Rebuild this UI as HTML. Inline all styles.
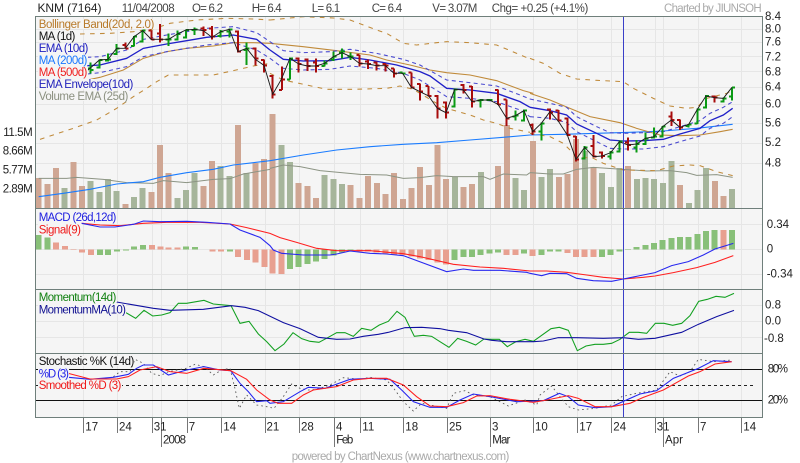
<!DOCTYPE html>
<html>
<head>
<meta charset="utf-8">
<style>
html,body{margin:0;padding:0;background:#fff;width:800px;height:463px;overflow:hidden}
svg{display:block}
text{font-family:"Liberation Sans",sans-serif;font-size:11.5px;fill:#222}
.n{fill:none}
</style>
</head>
<body>
<svg width="800" height="463" viewBox="0 0 800 463" xmlns="http://www.w3.org/2000/svg">
<rect x="36" y="17" width="726" height="401" fill="#f5f5f5"/>
<!-- grid -->
<path shape-rendering="crispEdges" stroke="#e6e6e6" fill="none" d="M83.5 17V418M117.5 17V418M152.5 17V418M161.5 17V418M187.5 17V418M221.5 17V418M265.5 17V418M299.5 17V418M334.5 17V418M360.5 17V418M403.5 17V418M447.5 17V418M490.5 17V418M533.5 17V418M577.5 17V418M611.5 17V418M655.5 17V418M663.5 17V418M698.5 17V418M741.5 17V418
M36 29.5H762M36 42.5H762M36 56.5H762M36 71.5H762M36 87.5H762M36 104.5H762M36 123.5H762M36 143.5H762M36 163.5H762
M36 224.5H762M36 249.5H762M36 274.5H762M36 305.5H762M36 321.5H762M36 337.5H762"/>
<g transform="scale(.33333)">
<!-- volume -->
<g transform="scale(3)" fill="none" stroke-width="6" shape-rendering="crispEdges">
<path stroke="#cfa693" d="M38.7 208V178M47.4 208V184M56 208V168M73.4 208V162M82 208V186M125.4 208V204M151.4 208V192M160.1 208V145M168.7 208V173M203.4 208V186M212.1 208V161M238.1 208V125M255.4 208V163M264.1 208V159M272.7 208V114M298.7 208V183M307.4 208V186M316.1 208V198M350.7 208V185M359.4 208V198M368.1 208V176M376.8 208V183M385.4 208V194M394.1 208V173M402.8 208V199M411.4 208V188M420.1 208V167M428.8 208V185M437.4 208V145M446.1 208V179M463.4 208V187M472.1 208V184M498.1 208V166M506.8 208V125M532.8 208V141M558.8 208V177M567.4 208V174M576.1 208V139M593.4 208V167M628.1 208V166M680.1 208V185M714.8 208V181M723.5 208V196"/>
<path stroke="#a6b59b" d="M64.7 208V188M90.7 208V181M99.4 208V192M108 208V179M116.7 208V191M134 208V197M142.7 208V188M177.4 208V198M186.1 208V190M194.7 208V173M220.7 208V166M229.4 208V176M246.7 208V173M281.4 208V145M290.1 208V162M324.7 208V175M333.4 208V179M342.1 208V184M454.8 208V177M480.8 208V172M515.4 208V178M524.1 208V190M541.4 208V177M550.1 208V169M584.8 208V151M602.1 208V173M610.8 208V187M619.4 208V168M636.8 208V179M645.5 208V178M654.1 208V179M662.8 208V183M671.5 208V161M688.8 208V203M697.5 208V190M706.1 208V168M732.1 208V189"/>
</g>
<!-- volume EMA -->
<g fill="none" stroke="#8c9484" stroke-width="3">
<polyline points="116,535 200,535 230,532 310,538 380,548 460,550 490,542 560,548 640,538 690,536 730,522 810,508"/>
<polyline transform="translate(810,0)" points="0,505 40,495 90,500 150,512 270,523 350,525 400,535 450,533 500,527 550,530 640,530 660,538 700,522 770,525 780,518"/>
<polyline transform="translate(1590,0)" points="0,518 60,522 100,522 140,508 190,502 280,508 350,513 420,512 470,518 500,526 560,524 608,532"/>
</g>
<!-- MA200 -->
<g fill="none" stroke="#1a7cff" stroke-width="3.2">
<polyline points="116,590 190,580 270,568 350,552 430,545 480,532 560,518 640,508 700,495 760,488 810,482"/>
<polyline transform="translate(810,0)" points="0,482 100,465 200,450 300,440 400,433 500,428 600,420 700,412 780,405"/>
<polyline transform="translate(1590,0)" points="0,405 100,403 200,400 300,397 400,393 500,385 608,373"/>
</g>
<!-- Bollinger bands -->
<g fill="none" stroke="#c08a3a" stroke-width="3.2" stroke-dasharray="14 16">
<polyline points="120,105 240,102 330,100 400,95 465,85 510,70 590,60 680,55 760,57 810,60"/>
<polyline transform="translate(810,0)" points="0,60 100,50 190,54 240,60 320,90 350,100 400,130 440,135 500,128 530,125 600,128 680,135 740,160 780,177"/>
<polyline transform="translate(1590,0)" points="0,175 40,190 90,220 140,237 200,241 280,245 310,265 370,295 420,318 470,325 500,322 530,295 590,280 608,270"/>
<polyline points="120,418 150,408 220,385 290,360 350,325 400,290 440,265 470,245 505,225 560,225 640,225 700,212 760,198 810,190"/>
<polyline transform="translate(810,0)" points="0,220 40,240 110,255 170,268 250,268 350,265 390,258 430,268 500,310 530,325 600,345 640,360 680,370 720,385 780,397"/>
<polyline transform="translate(1590,0)" points="0,400 60,410 100,430 140,470 190,475 220,490 280,510 380,512 430,498 480,495 510,497 560,515 608,527"/>
</g>
<g fill="none" stroke="#c08a3a" stroke-width="3.2">
<polyline points="262,240 300,232 370,210 430,175 500,155 560,145 640,138 700,128 760,128 810,130"/>
<polyline transform="translate(810,0)" points="0,130 100,140 200,152 300,165 350,180 420,195 480,210 530,218 600,225 680,242 760,272 790,280"/>
<polyline transform="translate(1590,0)" points="0,280 60,300 120,325 180,350 270,368 320,385 390,405 450,407 510,405 570,395 608,388"/>
</g>
<!-- EMA envelope -->
<g fill="none" stroke="#4a4ad0" stroke-width="3.2" stroke-dasharray="12 10">
<polyline points="262,172 300,170 380,150 430,118 500,105 560,95 620,85 700,80 770,98 810,125"/>
<polyline transform="translate(810,0)" points="0,125 40,152 100,158 180,155 240,148 320,160 400,178 450,195 530,240 600,248 680,258 750,285 780,297"/>
<polyline transform="translate(1590,0)" points="0,297 60,310 110,322 140,350 200,380 240,398 280,400 340,398 400,395 450,380 510,362 540,340 580,322 608,305"/>
<polyline points="262,222 300,218 380,200 430,170 500,155 560,145 620,135 700,128 770,150 810,175"/>
<polyline transform="translate(810,0)" points="0,175 40,205 100,210 180,208 240,198 320,205 400,220 450,240 530,290 600,295 680,305 750,330 780,350"/>
<polyline transform="translate(1590,0)" points="0,350 60,355 110,368 140,395 200,425 240,445 280,447 340,447 400,440 450,425 510,408 540,385 580,370 608,350"/>
</g>
<!-- EMA10 -->
<g fill="none" stroke="#2020c8" stroke-width="4">
<polyline points="262,197 300,195 380,175 430,145 500,132 560,122 620,112 700,105 770,118 810,150"/>
<polyline transform="translate(810,0)" points="0,150 40,178 100,183 180,182 240,172 300,180 380,195 450,215 480,228 530,265 600,270 680,280 750,305 780,322"/>
<polyline transform="translate(1590,0)" points="0,322 60,332 110,345 140,372 200,400 240,420 280,423 340,422 400,418 450,402 510,385 540,362 580,345 608,325"/>
</g>
<!-- OHLC -->
<g fill="none" stroke-width="6" shape-rendering="crispEdges">
<path stroke="#0a9a14" d="M272 188V220M263 205H272M272 210H281M298 178V205M289 203H298M298 180H307M324 160V185M315 182H324M324 178H333M350 132V165M341 162H350M350 145H359M402 108V140M393 138H402M402 110H411M428 90V128M419 125H428M428 92H437M506 100V138M497 118H506M506 118H515M532 92V122M523 118H532M532 102H541M558 88V115M549 112H558M558 90H567M584 82V105M575 90H584M584 88H593M662 90V112M653 108H662M662 95H671M688 85V112M679 95H688M688 88H697M740 128V195M731 150H740M740 145H749"/>
<path stroke="#a80c0c" d="M376 128V145M367 135H376M376 145H385M454 90V120M445 92H454M454 118H463M480 72V128M471 100H480M480 118H489M610 80V108M601 85H610M610 90H619M636 78V118M627 85H636M636 110H645M714 92V158M705 95H714M714 155H723M766 142V196M757 145H766M766 175H775M792 178V218M783 180H792M792 196H801"/>
<g transform="translate(810,0)">
<path stroke="#0a9a14" d="M60 172V238M51 238H60M60 175H69M164 182V200M155 198H164M164 190H173M190 155V183M181 178H190M190 170H199M216 145V175M207 158H216M216 155H225M242 158V180M233 170H242M242 170H251M398 218V222M389 218H398M398 220H407M554 265V322M545 320H554M554 268H563M632 297V323M623 302H632M632 300H641M658 297V302M649 300H658M658 300H667M736 332V362M727 350H736M736 347H745M762 328V365M753 362H762M762 332H771"/>
<path stroke="#a80c0c" d="M8 225V295M-1 228H8M8 283H17M36 200V270M27 270H36M36 238H45M86 172V218M77 175H86M86 192H95M112 175V213M103 178H112M112 198H121M138 175V218M129 188H138M138 198H147M268 165V200M259 165H268M268 190H277M294 178V207M285 185H294M294 192H303M320 185V212M311 187H320M320 197H329M346 190V215M337 192H346M346 197H355M372 205V233M363 205H372M372 220H381M424 218V265M415 218H424M424 262H433M450 250V302M441 252H450M450 275H459M476 258V290M467 258H476M476 288H485M502 285V355M493 288H502M502 325H511M528 305V355M519 307H528M528 338H537M580 252V280M571 255H580M580 270H589M606 258V322M597 260H606M606 305H615M684 268V315M675 270H684M684 313H693M710 298V378M701 298H710M710 355H719"/>
</g>
<g transform="translate(1590,0)">
<path stroke="#0a9a14" d="M34 368V422M25 395H34M34 370H43M164 438V478M155 475H164M164 442H173M242 453V478M233 470H242M242 458H251M268 422V458M259 455H268M268 425H277M320 420V458M311 442H320M320 432H329M346 398V435M337 432H346M346 415H355M372 382V415M363 412H372M372 410H381M398 378V412M389 410H398M398 380H407M476 372V382M467 378H476M476 373H485M502 325V372M493 370H502M502 328H511M528 285V325M519 323H528M528 288H537M580 293V308M571 305H580M580 295H589M606 262V302M597 290H606M606 262H615"/>
<path stroke="#a80c0c" d="M8 370V405M-1 375H8M8 395H17M60 325V358M51 328H60M60 338H69M86 330V365M77 332H86M86 362H95M112 352V408M103 355H112M112 405H121M138 408V485M129 410H138M138 478H147M190 405V472M181 438H190M190 470H199M216 455V475M207 458H216M216 468H225M294 412V452M285 428H294M294 435H303M424 335V378M415 350H424M424 360H433M450 358V390M441 360H450M450 382H459M554 287V308M545 290H554M554 293H563"/>
</g>
</g>
<!-- close line -->
<g fill="none" stroke="#1a1a1a" stroke-width="2.8">
<polyline points="262,212 298,180 324,178 350,145 376,145 402,110 428,92 454,118 480,118 506,118 532,102 558,90 584,88 610,92 636,112 662,95 688,88 714,155 740,145 766,178 792,196 818,283 844,238 870,175 896,192 922,198 948,198 974,190 1000,170 1026,158 1052,170 1078,190 1104,192 1130,197 1156,197 1182,220 1208,220 1234,262 1260,275 1286,288 1312,325 1338,338 1364,268 1390,270 1416,305 1442,300 1468,300 1494,313 1520,355 1546,347 1572,332 1598,395 1624,370 1650,335 1676,365 1702,405 1728,478 1754,442 1780,470 1806,468 1832,458 1858,425 1884,435 1910,432 1936,415 1962,410 1988,380 2014,360 2040,382 2066,373 2092,328 2118,288 2144,293 2170,295 2196,262"/>
</g>
<!-- MACD histogram -->
<g fill="none" stroke-width="18" transform="translate(0,615)" shape-rendering="crispEdges">
<path stroke="#88c078" d="M116 133V90M143 133V98M300 133V150M324 133V150M351 133V140M378 133V137M402 133V125M429 133V120M558 133V125M585 133V126M690 133V140"/>
<path stroke="#e8a090" d="M168 133V113M195 133V123M221 133V132M246 133V143M273 133V150M456 133V120M481 133V125M506 133V128M533 133V128M612 133V134M637 133V140M663 133V140M714 133V156M741 133V165M767 133V173"/>
<g transform="translate(810,0)">
<path stroke="#88c078" d="M60 133V192M86 133V186M112 133V177M138 133V170M164 133V162M190 133V152M216 133V143M242 133V140M554 133V165M580 133V156M606 133V156M632 133V150M658 133V146M684 133V143M762 133V146"/>
<path stroke="#e8a090" d="M-17 133V186M8 133V206M34 133V207M268 133V140M294 133V140M320 133V143M346 133V146M372 133V148M398 133V150M424 133V155M450 133V161M476 133V165M502 133V173M528 133V178M710 133V150M736 133V150M788 133V153"/>
</g>
<g transform="translate(1590,0)">
<path stroke="#88c078" d="M34 133V150M60 133V140M86 133V140M216 133V156M242 133V150M268 133V140M294 133V132M320 133V126M346 133V120M372 133V114M398 133V105M424 133V99M450 133V96M476 133V96M502 133V87M528 133V78M554 133V75M606 133V75"/>
<path stroke="#e8a090" d="M8 133V153M112 133V144M138 133V156M164 133V156M190 133V156M580 133V75"/>
</g>
</g>
<!-- MACD lines -->
<g fill="none" stroke-width="3.2" transform="translate(0,615)">
<polyline stroke="#ff2020" points="245,55 300,60 360,62 430,55 500,52 600,52 690,57 740,68 810,85 840,98 890,112 950,130 1010,137 1110,137 1210,146 1260,155 1360,178 1440,186 1510,190 1590,198 1640,198 1700,202 1760,210 1810,217 1870,222 1930,217 1965,213 2020,203 2090,188 2145,172 2200,152"/>
<polyline stroke="#2828f0" points="245,55 300,66 345,66 400,58 430,48 480,50 560,49 620,52 690,57 720,75 780,97 810,122 820,135 845,145 910,150 990,150 1010,147 1050,138 1110,145 1160,147 1210,152 1340,200 1390,192 1420,196 1500,196 1580,202 1590,205 1625,212 1650,205 1700,206 1730,220 1780,227 1835,229 1870,222 1920,212 1965,203 2015,182 2065,170 2110,150 2145,132 2200,115"/>
</g>
<!-- Momentum -->
<g fill="none" stroke-width="3.2">
<g transform="translate(90,870)">
<polyline stroke="#12a020" points="288,68 317,85 342,61 368,78 395,75 420,68 445,40 470,40 522,31 550,42 603,47 630,100 657,94 685,132 710,155 735,182 762,162 789,128 815,146 840,154 867,157 895,142 920,128 945,128 970,139 995,115 1023,121 1048,105 1075,94 1101,64 1125,82 1153,139 1180,136 1205,139 1230,155 1257,172 1283,145 1310,154 1337,165 1362,147 1380,148 1408,148 1432,170 1458,155 1485,148 1510,154 1563,116 1588,112 1615,121 1642,182 1668,168 1695,163 1720,163 1745,160 1770,148 1798,127 1825,127 1850,130 1876,100 1902,100 1928,106 1955,100 1980,77 2006,34 2032,28 2058,19 2085,22 2112,10"/>
<polyline stroke="#0f0fa0" points="260,36 300,43 370,55 420,61 520,58 605,47 645,52 685,62 760,98 810,116 865,142 920,148 960,147 1000,139 1045,133 1075,127 1125,113 1175,112 1230,116 1255,121 1310,128 1362,147 1385,151 1430,155 1510,155 1540,153 1585,143 1640,143 1720,145 1780,143 1825,148 1875,145 1955,127 2005,103 2060,80 2112,61"/>
</g>
</g>
<!-- Stochastic -->
<g transform="translate(0,1020)" fill="none">
<path stroke="#111" stroke-width="3" d="M108 88H2286M108 181H2286" shape-rendering="crispEdges"/>
<path stroke="#222" stroke-width="3" stroke-dasharray="9 9" d="M108 136H2265" shape-rendering="crispEdges"/>
<polyline stroke="#555" stroke-width="2.6" stroke-dasharray="5 9" points="340,110 360,95 390,95 405,58 430,70 455,100 480,107 506,95 558,85 585,73 612,80 640,105 665,90 690,85 706,150 718,205 740,165 770,195 800,200 822,205 850,170 875,132 900,145 925,150 950,148 990,135 1030,113 1080,118 1110,112 1160,120 1185,150 1210,185 1240,213 1265,190 1290,195 1340,205 1360,160 1395,152 1420,165 1470,170 1525,198 1575,180 1610,195 1620,165 1655,138 1680,170 1705,200 1735,210 1785,205 1835,195 1865,170 1910,160 1970,150 2010,95 2040,108 2070,95 2095,58 2140,65 2195,60"/>
<polyline stroke="#2424f0" stroke-width="3.2" points="205,112 270,118 340,112 385,103 410,85 430,75 460,75 505,105 560,90 612,80 660,90 692,92 720,130 745,155 770,185 800,182 810,190 850,185 900,155 925,142 975,145 1050,118 1110,115 1170,118 1205,150 1240,185 1290,202 1340,202 1380,180 1420,162 1470,170 1550,185 1630,182 1678,160 1705,170 1735,195 1785,203 1835,200 1875,182 1920,162 1970,152 2020,115 2095,85 2140,62 2195,65"/>
<polyline stroke="#ff1f1f" stroke-width="3.2" points="205,100 270,117 350,117 385,110 420,90 470,80 510,95 560,100 612,85 692,92 740,118 770,150 810,180 835,190 875,190 910,165 940,150 1010,140 1060,120 1110,115 1160,115 1210,135 1250,170 1290,198 1340,200 1390,188 1430,168 1470,167 1530,178 1600,187 1640,180 1705,167 1735,175 1785,200 1835,200 1890,190 1930,172 1990,150 2065,108 2100,95 2145,72 2195,65"/>
</g>
</g>
<!-- crosshair -->
<path shape-rendering="crispEdges" stroke="#3a3fc8" d="M623.5 17V418"/>
<!-- frame -->
<g fill="none" stroke="#6f7f7b" shape-rendering="crispEdges">
<rect x="35.5" y="16.5" width="727" height="401"/>
<path d="M36 208.5H762M36 289.5H762M36 353.5H762"/>
</g>
<!-- ticks -->
<path shape-rendering="crispEdges" stroke="#777" fill="none" d="M83.5 418V433M117.5 418V433M152.5 418V433M161.5 418V447M187.5 418V433M221.5 418V433M265.5 418V433M299.5 418V433M334.5 418V447M360.5 418V433M403.5 418V433M447.5 418V433M490.5 418V447M533.5 418V433M577.5 418V433M611.5 418V433M655.5 418V433M663.5 418V447M698.5 418V433M741.5 418V433"/>
<!-- legend backgrounds -->
<g fill="#f5f5f5">
<rect x="38" y="19" width="117" height="10"/><rect x="38" y="31" width="38" height="10"/><rect x="38" y="43" width="51" height="10"/><rect x="38" y="55" width="50" height="10"/><rect x="38" y="67" width="50" height="10"/><rect x="38" y="79" width="96" height="10"/><rect x="38" y="91" width="91" height="10"/>
<rect x="38" y="212" width="79" height="10"/><rect x="38" y="224" width="44" height="10"/>
<rect x="38" y="292" width="79" height="10"/><rect x="38" y="304" width="88" height="10"/>
<rect x="38" y="356" width="96" height="10"/><rect x="38" y="368" width="31" height="10"/><rect x="38" y="380" width="84" height="10"/>
</g>
<!-- header -->
<text x="37.5" y="12" style="font-size:12px" textLength="64" lengthAdjust="spacing">KNM (7164)</text>
<g>
<text x="121.7" y="12" style="fill:#444" textLength="53" lengthAdjust="spacing">11/04/2008</text>
<text x="192" y="12" style="fill:#444" textLength="31" lengthAdjust="spacing">O= 6.2</text>
<text x="251.7" y="12" style="fill:#444" textLength="30" lengthAdjust="spacing">H= 6.4</text>
<text x="311.7" y="12" style="fill:#444" textLength="28.5" lengthAdjust="spacing">L= 6.1</text>
<text x="371.7" y="12" style="fill:#444" textLength="30.5" lengthAdjust="spacing">C= 6.4</text>
<text x="432.3" y="12" style="fill:#444" textLength="45" lengthAdjust="spacing">V= 3.07M</text>
<text x="491.7" y="12" style="fill:#444" textLength="96.6" lengthAdjust="spacing">Chg= +0.25 (+4.1%)</text>
</g>
<text x="664" y="12" style="fill:#aaa" textLength="97.7" lengthAdjust="spacing">Charted by JIUNSOH</text>
<!-- main legend -->
<text x="38.7" y="28" style="fill:#b87a2a" textLength="115.7" lengthAdjust="spacing">Bollinger Band(20d, 2.0)</text>
<text x="38.7" y="40" style="fill:#111" textLength="36.7" lengthAdjust="spacing">MA (1d)</text>
<text x="38.7" y="52" style="fill:#2020c0" textLength="49.7" lengthAdjust="spacing">EMA (10d)</text>
<text x="38.7" y="64" style="fill:#1a78ff" textLength="48.7" lengthAdjust="spacing">MA (200d)</text>
<text x="38.7" y="76" style="fill:#f02020" textLength="48.7" lengthAdjust="spacing">MA (500d)</text>
<text x="38.7" y="88" style="fill:#2222bb" textLength="94.7" lengthAdjust="spacing">EMA Envelope(10d)</text>
<text x="38.7" y="100" style="fill:#8b9080" textLength="89.7" lengthAdjust="spacing">Volume EMA (25d)</text>
<!-- volume labels -->
<text x="3.3" y="136" textLength="29.4" lengthAdjust="spacing">11.5M</text>
<text x="2.7" y="154.7" textLength="30" lengthAdjust="spacing">8.66M</text>
<text x="2.7" y="173.3" textLength="30" lengthAdjust="spacing">5.77M</text>
<text x="2.7" y="192.7" textLength="30" lengthAdjust="spacing">2.89M</text>
<!-- right axis -->
<g>
<text x="765" y="20">8.4</text><text x="765" y="32.7">8.0</text><text x="765" y="45.7">7.6</text><text x="765" y="60.7">7.2</text><text x="765" y="75.3">6.8</text><text x="765" y="90.7">6.4</text><text x="765" y="107.7">6.0</text><text x="765" y="126.7">5.6</text><text x="765" y="146">5.2</text><text x="765" y="166.7">4.8</text>
<text x="766.7" y="228">0.34</text><text x="766.7" y="252.7">0</text><text x="766.7" y="277.7">-0.34</text>
<text x="765" y="308.7">0.8</text><text x="765" y="324.7">0.0</text><text x="764" y="342">-0.8</text>
<text x="767.7" y="372.7" textLength="20.3" lengthAdjust="spacing">80%</text><text x="767.7" y="403.3" textLength="20.3" lengthAdjust="spacing">20%</text>
</g>
<!-- pane legends -->
<text x="38.7" y="221" style="fill:#2020e0" textLength="77.7" lengthAdjust="spacing">MACD (26d,12d)</text>
<text x="38.7" y="233.3" style="fill:#f01818" textLength="42.3" lengthAdjust="spacing">Signal(9)</text>
<text x="38.7" y="301" style="fill:#108010" textLength="77.6" lengthAdjust="spacing">Momentum(14d)</text>
<text x="38.7" y="313.3" style="fill:#101090" textLength="87.3" lengthAdjust="spacing">MomentumMA(10)</text>
<text x="38.7" y="365" style="fill:#111" textLength="95.7" lengthAdjust="spacing">Stochastic %K (14d)</text>
<text x="38.7" y="377.3" style="fill:#2020e8" textLength="30.3" lengthAdjust="spacing">%D (3)</text>
<text x="38.7" y="389" style="fill:#f01818" textLength="82.7" lengthAdjust="spacing">Smoothed %D (3)</text>
<!-- x axis -->
<g>
<text x="85.3" y="430.7">17</text><text x="119" y="430.7">24</text><text x="153.7" y="430.7">31</text><text x="188.7" y="430.7">7</text><text x="223.3" y="430.7">14</text><text x="266.5" y="430.7">21</text><text x="301" y="430.7">28</text><text x="336" y="430.7">4</text><text x="362.3" y="430.7">11</text><text x="405.3" y="430.7">18</text><text x="449" y="430.7">25</text><text x="492" y="430.7">3</text><text x="535" y="430.7">10</text><text x="579.3" y="430.7">17</text><text x="613.3" y="430.7">24</text><text x="656.7" y="430.7">31</text><text x="700" y="430.7">7</text><text x="743.3" y="430.7">14</text>
<text x="163" y="443.7" textLength="23" lengthAdjust="spacing">2008</text><text x="336.3" y="443.7" textLength="17" lengthAdjust="spacing">Feb</text><text x="492.3" y="443.7" textLength="18" lengthAdjust="spacing">Mar</text><text x="665" y="443.7" textLength="18" lengthAdjust="spacing">Apr</text>
</g>
<text x="291.7" y="460" style="fill:#aaa" textLength="217.6" lengthAdjust="spacing">powered by ChartNexus (www.chartnexus.com)</text>
</svg>
</body>
</html>
